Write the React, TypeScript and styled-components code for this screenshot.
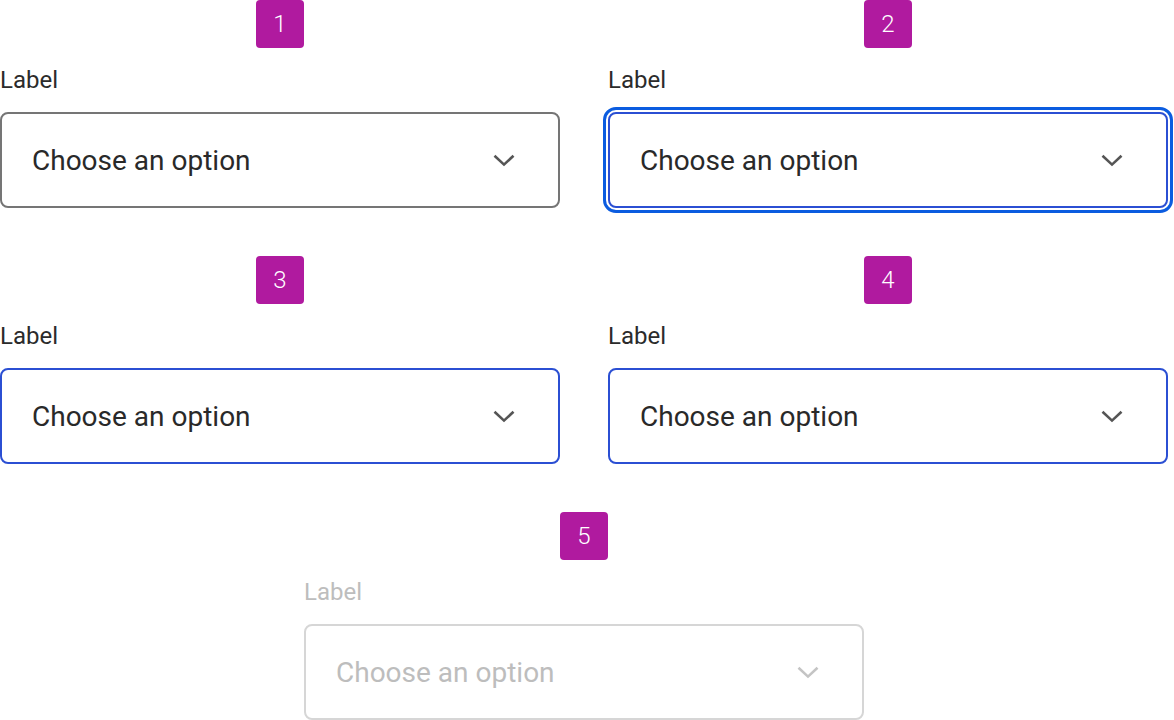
import React from "react";
import styled, { createGlobalStyle, css } from "styled-components";

const Global = createGlobalStyle`
  html, body { margin: 0; padding: 0; background: #ffffff; }
  body { font-family: Roboto, "Liberation Sans", Arial, sans-serif; }
`;

type Variant = "default" | "focus" | "hover" | "disabled";

const Page = styled.div`
  display: grid;
  grid-template-columns: 560px 560px;
  column-gap: 48px;
  row-gap: 48px;
  width: 1168px;
`;

const Cell = styled.div<{ $wide?: boolean }>`
  display: flex;
  flex-direction: column;
  width: 560px;
  ${(p) =>
    p.$wide &&
    css`
      grid-column: 1 / span 2;
      justify-self: center;
    `}
`;

const Badge = styled.div`
  align-self: center;
  width: 48px;
  height: 48px;
  border-radius: 4px;
  background: #b01a9f;
  color: #ffffff;
  font-size: 24px;
  font-weight: 300;
  display: flex;
  align-items: center;
  justify-content: center;
`;

const Label = styled.div<{ $disabled?: boolean }>`
  margin-top: 16px;
  font-size: 24px;
  line-height: 32px;
  color: ${(p) => (p.$disabled ? "#bdbdbd" : "#2b2b2b")};
`;

const Box = styled.div<{ $variant: Variant }>`
  margin-top: 16px;
  box-sizing: border-box;
  height: 96px;
  border-radius: 8px;
  border: 2px solid #757575;
  padding: 0 42px 0 30px;
  display: flex;
  align-items: center;
  justify-content: space-between;
  color: #292929;
  font-size: 28px;
  background: #ffffff;
  ${(p) =>
    p.$variant === "hover" &&
    css`
      border-color: #2b4fd3;
    `}
  ${(p) =>
    p.$variant === "focus" &&
    css`
      border-color: #2b4fd3;
      outline: 3px solid #0b5ce0;
      outline-offset: 2px;
    `}
  ${(p) =>
    p.$variant === "disabled" &&
    css`
      border-color: #d6d6d6;
      color: #bdbdbd;
    `}
`;

const Chevron = ({ color }: { color: string }) => (
  <svg width="24" height="24" viewBox="0 0 24 24" fill="none">
    <polyline
      points="2.5,7.8 12,16.6 21.5,7.8"
      stroke={color}
      strokeWidth="2.6"
      strokeLinecap="butt"
      strokeLinejoin="miter"
    />
  </svg>
);

const Item = ({ n, variant, wide }: { n: number; variant: Variant; wide?: boolean }) => (
  <Cell $wide={wide}>
    <Badge>{n}</Badge>
    <Label $disabled={variant === "disabled"}>Label</Label>
    <Box $variant={variant}>
      <span>Choose an option</span>
      <Chevron color={variant === "disabled" ? "#c4c4c4" : "#555555"} />
    </Box>
  </Cell>
);

export default function App() {
  return (
    <>
      <Global />
      <Page>
        <Item n={1} variant="default" />
        <Item n={2} variant="focus" />
        <Item n={3} variant="hover" />
        <Item n={4} variant="hover" />
        <Item n={5} variant="disabled" wide />
      </Page>
    </>
  );
}
